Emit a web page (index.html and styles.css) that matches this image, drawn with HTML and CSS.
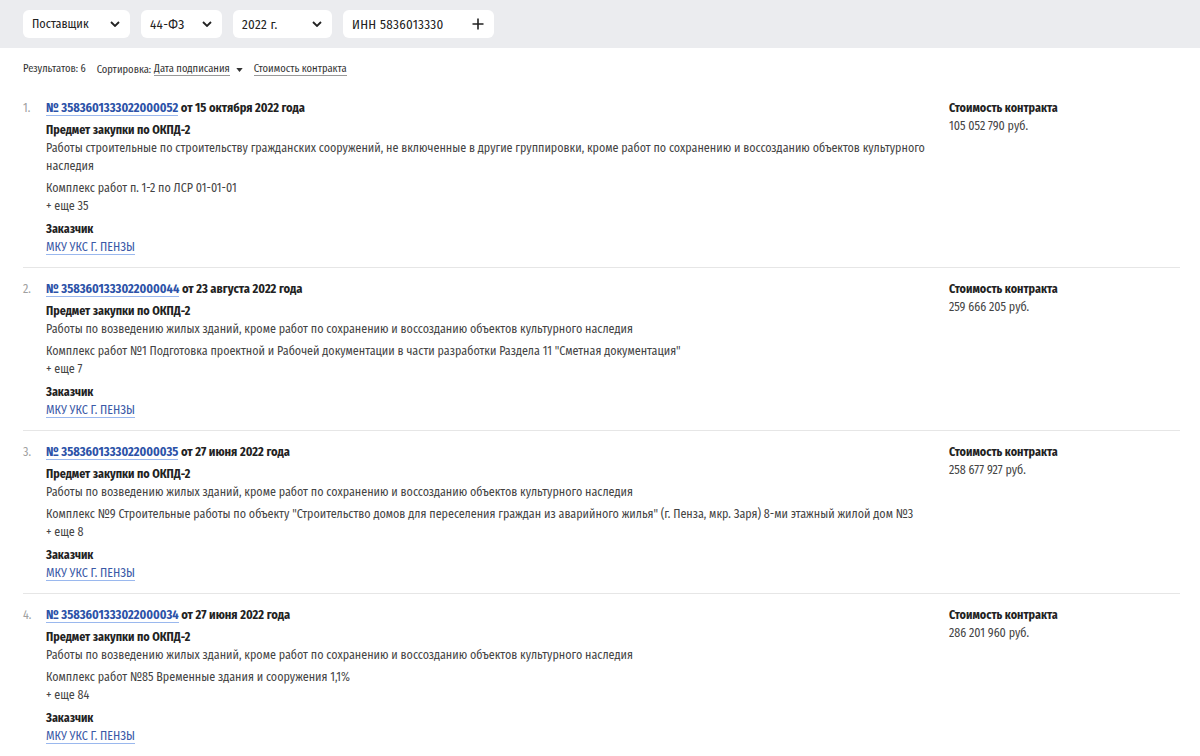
FILE: index.html
```html
<!DOCTYPE html>
<html lang="ru">
<head>
<meta charset="utf-8">
<title>Контракты</title>
<link rel="stylesheet" href="styles.css">
</head>
<body>
<div class="filters">
  <div class="select w1"><span>Поставщик</span><svg class="chev" viewBox="0 0 10 6"><path d="M1 1l4 4 4-4"/></svg></div>
  <div class="select w2"><span class="num-txt">44-ФЗ</span><svg class="chev" viewBox="0 0 10 6"><path d="M1 1l4 4 4-4"/></svg></div>
  <div class="select w3"><span class="num-txt">2022 г.</span><svg class="chev" viewBox="0 0 10 6"><path d="M1 1l4 4 4-4"/></svg></div>
  <div class="select w4"><span class="num-txt">ИНН 5836013330</span><svg class="plus" viewBox="0 0 12 12"><path d="M6 0.5v11M0.5 6h11"/></svg></div>
</div>
<div class="content">
  <div class="toolbar">
    <span>Результатов: 6</span>
    <span class="sort">Сортировка: <span class="ul">Дата подписания</span><svg class="tri" viewBox="0 0 8 5"><path d="M0 0h8L4 5z"/></svg><span class="ul">Стоимость контракта</span></span>
  </div>

  <div class="item">
    <div class="num">1.</div>
    <div class="main">
      <div class="head"><a class="link">№ 3583601333022000052</a> от 15 октября 2022 года</div>
      <div class="block"><div class="label">Предмет закупки по ОКПД-2</div>
        <div class="text">Работы строительные по строительству гражданских сооружений, не включенные в другие группировки, кроме работ по сохранению и воссозданию объектов культурного наследия</div></div>
      <div class="block"><div class="text">Комплекс работ п. 1-2 по ЛСР 01-01-01</div><div class="text">+ еще 35</div></div>
      <div class="block cust-block"><div class="label">Заказчик</div><a class="cust">МКУ УКС Г. ПЕНЗЫ</a></div>
    </div>
    <div class="price"><div class="label">Стоимость контракта</div><div class="text">105 052 790 руб.</div></div>
  </div>

  <div class="item">
    <div class="num">2.</div>
    <div class="main">
      <div class="head"><a class="link">№ 3583601333022000044</a> от 23 августа 2022 года</div>
      <div class="block"><div class="label">Предмет закупки по ОКПД-2</div>
        <div class="text">Работы по возведению жилых зданий, кроме работ по сохранению и воссозданию объектов культурного наследия</div></div>
      <div class="block"><div class="text">Комплекс работ №1 Подготовка проектной и Рабочей документации в части разработки Раздела 11 "Сметная документация"</div><div class="text">+ еще 7</div></div>
      <div class="block cust-block"><div class="label">Заказчик</div><a class="cust">МКУ УКС Г. ПЕНЗЫ</a></div>
    </div>
    <div class="price"><div class="label">Стоимость контракта</div><div class="text">259 666 205 руб.</div></div>
  </div>

  <div class="item">
    <div class="num">3.</div>
    <div class="main">
      <div class="head"><a class="link">№ 3583601333022000035</a> от 27 июня 2022 года</div>
      <div class="block"><div class="label">Предмет закупки по ОКПД-2</div>
        <div class="text">Работы по возведению жилых зданий, кроме работ по сохранению и воссозданию объектов культурного наследия</div></div>
      <div class="block"><div class="text">Комплекс №9 Строительные работы по объекту "Строительство домов для переселения граждан из аварийного жилья" (г. Пенза, мкр. Заря) 8-ми этажный жилой дом №3</div><div class="text">+ еще 8</div></div>
      <div class="block cust-block"><div class="label">Заказчик</div><a class="cust">МКУ УКС Г. ПЕНЗЫ</a></div>
    </div>
    <div class="price"><div class="label">Стоимость контракта</div><div class="text">258 677 927 руб.</div></div>
  </div>

  <div class="item">
    <div class="num">4.</div>
    <div class="main">
      <div class="head"><a class="link">№ 3583601333022000034</a> от 27 июня 2022 года</div>
      <div class="block"><div class="label">Предмет закупки по ОКПД-2</div>
        <div class="text">Работы по возведению жилых зданий, кроме работ по сохранению и воссозданию объектов культурного наследия</div></div>
      <div class="block"><div class="text">Комплекс работ №85 Временные здания и сооружения 1,1%</div><div class="text">+ еще 84</div></div>
      <div class="block cust-block"><div class="label">Заказчик</div><a class="cust">МКУ УКС Г. ПЕНЗЫ</a></div>
    </div>
    <div class="price"><div class="label">Стоимость контракта</div><div class="text">286 201 960 руб.</div></div>
  </div>
</div>
</body>
</html>
```
FILE: styles.css
```css
* { box-sizing: border-box; }
html, body { margin: 0; padding: 0; background: #fff; }
body {
  font-family: "Fira Sans Condensed", "PT Sans", "DejaVu Sans Condensed", sans-serif;
  color: #222;
  font-size: 12px;
  overflow: hidden;
}
.filters {
  background: #ebecef;
  height: 48px;
  padding: 10px 23px;
  display: flex;
  gap: 11px;
}
.select {
  background: #fff;
  border-radius: 6px;
  height: 28px;
  display: flex;
  align-items: center;
  justify-content: space-between;
  padding: 0 10px 0 9px;
  font-size: 12.2px;
  color: #222;
}
.num-txt { font-size: 13px; letter-spacing: 0.3px; }
.w1 { width: 107px; }
.w2 { width: 81px; }
.w3 { width: 99px; }
.w4 { width: 151px; }
.chev { width: 10px; height: 6px; fill: none; stroke: #222; stroke-width: 1.8; }
.plus { width: 12px; height: 12px; fill: none; stroke: #222; stroke-width: 1.6; }
.content { padding: 0 20px 0 23px; }
.toolbar {
  font-size: 10.5px;
  color: #333;
  padding-top: 14px;
  height: 39px;
  display: flex;
  align-items: flex-start;
  gap: 11px;
}
.sort { display: inline-flex; align-items: center; }
.ul { border-bottom: 1px solid #999; margin-left: 3px; line-height: 13px; }
.tri { width: 7px; height: 4px; fill: #333; margin: 1px 8px 0 6px; }
.item {
  display: flex;
  padding: 12px 0 11px;
  border-bottom: 1px solid #e6e6e6;
  line-height: 18px;
}
.num { width: 23px; color: #a0a0a0; font-size: 12px; }
.main { flex: 1; padding-right: 20px; }
.head { font-weight: bold; color: #222; font-size: 12.4px; }
.link { color: #2c52a8; border-bottom: 1px solid #9ab8ee; font-weight: bold; }
.block { margin-top: 4px; }
.cust-block { margin-top: 5px; }
.label { font-weight: bold; color: #222; }
.text { color: #444; }
.cust { color: #3b5aa7; border-bottom: 1px solid #9ab8ee; }
.price { width: 231px; }
```
